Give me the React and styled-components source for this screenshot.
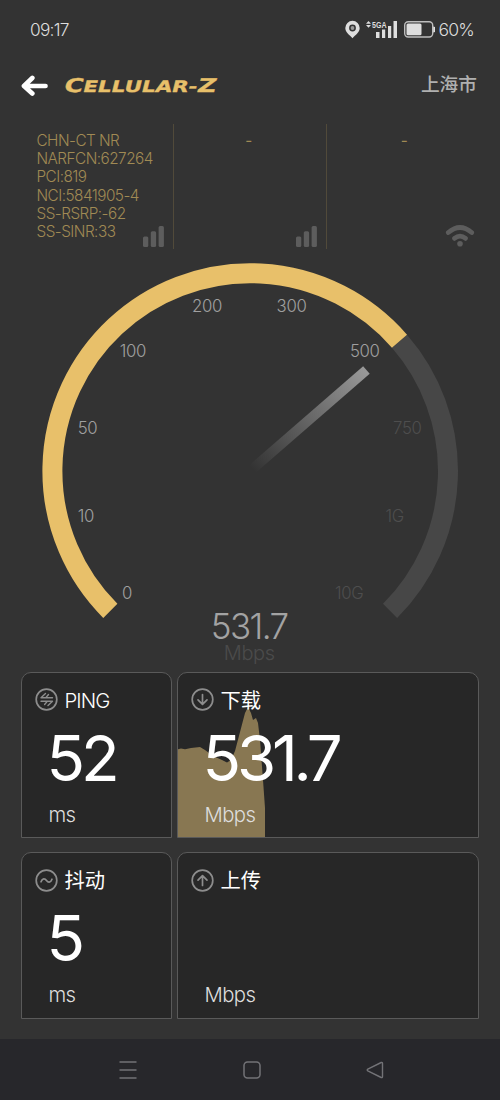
import React from 'react';
import styled, { createGlobalStyle } from 'styled-components';

const colors = {
  background: '#333333',
  card: '#272727',
  cardBorder: '#5a5a5a',
  gold: '#e8c06a',
  goldDim: '#a08a54',
  goldFill: '#887752',
  track: '#474747',
  icon: '#5d5d5d',
};

const fontStack = "Inter, 'Noto Sans CJK SC', sans-serif";

const GlobalStyle = createGlobalStyle`
  body {
    margin: 0;
    background: ${colors.background};
  }

  * {
    box-sizing: border-box;
  }

  svg {
    display: block;
  }
`;

const Screen = styled.div`
  width: 500px;
  height: 1100px;
  display: flex;
  flex-direction: column;
  overflow: hidden;
  background: ${colors.background};
  font-family: ${fontStack};
  font-weight: 300;
`;

const StatusBar = styled.div`
  height: 58px;
  padding: 0 26px 0 30px;
  display: flex;
  align-items: center;
  justify-content: space-between;
  color: #dedede;
`;

const Clock = styled.span`
  font-size: 17.3px;
  letter-spacing: -0.75px;
`;

const StatusIcons = styled.div`
  display: flex;
  align-items: center;
  gap: 6px;
`;

const Battery = styled.div`
  display: flex;
  align-items: center;
  gap: 3px;
  margin-left: 1px;
`;

const Percent = styled.span`
  font-size: 17.6px;
  letter-spacing: -0.8px;
`;

const Header = styled.header`
  height: 54px;
  padding: 0 23px 0 21px;
  display: flex;
  align-items: center;
  gap: 14px;
`;

const City = styled.span`
  margin: -5px 0 0 auto;
  font-family: 'Noto Sans CJK SC', sans-serif;
  font-size: 18.7px;
  font-weight: 500;
  color: #b0b0b0;
`;

const NetworkRow = styled.div`
  display: grid;
  grid-template-columns: 154px 153px 1fr;
  height: 125px;
  margin: 12px 20px 0;
`;

const NetworkCell = styled.div`
  display: flex;
  flex-direction: column;
  justify-content: space-between;
  padding: 8px ${({ last }) => (last ? '5px' : '9px')} 2px 0;
  border-right: ${({ last }) => (last ? 'none' : '1px solid #514a3a')};
  color: ${colors.goldDim};
  font-size: 15.3px;
  line-height: 18.2px;
  letter-spacing: -0.52px;

  > svg {
    align-self: flex-end;
  }
`;

const NetworkLines = styled.div`
  height: 92px;
  padding-left: 16.5px;
  white-space: nowrap;
`;

const Dash = styled.div`
  padding-left: 6px;
  font-weight: 400;
  text-align: center;
`;

const GaugeArea = styled.div`
  height: 422.5px;
`;

const Cards = styled.div`
  display: grid;
  grid-template-columns: 151px 302px;
  grid-template-rows: 166.5px 166.5px;
  gap: 14px 5px;
  padding-left: 21px;
`;

const Card = styled.section`
  position: relative;
  overflow: hidden;
  padding: 15px 0 0 12.5px;
  background: ${colors.card};
  border: 1px solid ${colors.cardBorder};
  border-radius: 10px 10px 0 0;
`;

const CardHeader = styled.div`
  position: relative;
  display: flex;
  align-items: center;
  height: 24px;
  gap: 7px;
  color: #8d8d8d;
`;

const CardTitle = styled.span`
  padding-top: 2px;
  color: #ffffff;
  font-size: 20.3px;
  letter-spacing: ${({ latin }) => (latin ? '-0.9px' : '0')};
  font-weight: ${({ latin }) => (latin ? 300 : 400)};
  line-height: 24px;
`;

const Value = styled.div`
  position: relative;
  height: 94px;
  padding-left: 12px;
  color: #ffffff;
  font-size: 63.5px;
  font-weight: 400;
  line-height: 92px;
  letter-spacing: -4.2px;
`;

const Unit = styled.div`
  position: relative;
  padding-left: 14px;
  color: #dddddd;
  font-size: 20.3px;
  line-height: 17px;
  letter-spacing: -0.6px;
`;

const ChartLayer = styled.svg`
  position: absolute;
  left: -1px;
  bottom: -1px;
`;

const NavBar = styled.nav`
  height: 61px;
  margin-top: auto;
  padding: 0 116px 0 119px;
  display: flex;
  align-items: center;
  justify-content: space-between;
  background: #27272b;
`;

const PinIcon = () => (
  <svg width="15" height="19" viewBox="0 0 15 19">
    <path
      fill="#dedede"
      fillRule="evenodd"
      d="M7.500 0.800a7.200 7.200 0 0 1 7.200 7.200c0 4.300-4.200 7-7.200 10.200c-3-3.200-7.200-5.900-7.200-10.200a7.200 7.200 0 0 1 7.200-7.200zM7.500 4.600a3.400 3.400 0 1 0 0 6.800a3.400 3.400 0 0 0 0-6.800z"
    />
    <circle cx="7.500" cy="8" r="1.900" fill="#9a9a9a" />
  </svg>
);

const CellIcon = () => (
  <svg width="31" height="19" viewBox="0 0 31 19" fill="#dedede">
    <path d="M0 3.800L2.500 1L5 3.800zM0 5H5L2.500 7.800z" />
    <text
      x="6"
      y="8"
      fontFamily="'Liberation Sans', sans-serif"
      fontSize="9.500"
      fontWeight="700"
      textLength="14.500"
      lengthAdjust="spacingAndGlyphs"
    >
      5GA
    </text>
    <rect x="10" y="12" width="3.500" height="6" />
    <rect x="16" y="9.500" width="3.200" height="8.500" />
    <rect x="22" y="6" width="3.200" height="12" />
    <rect x="27.500" y="1" width="3.500" height="17" />
  </svg>
);

const BatteryIcon = () => (
  <svg width="31" height="17" viewBox="0 0 31 17">
    <rect
      x="0.700"
      y="0.700"
      width="28"
      height="15.300"
      rx="3.500"
      fill="none"
      stroke="#bdbdbd"
      strokeWidth="1.400"
    />
    <rect x="2.500" y="2.500" width="15" height="11.700" rx="1.500" fill="#dedede" />
    <path d="M29.200 5.500a2.800 2.800 0 0 1 0 6z" fill="#dedede" />
  </svg>
);

const BackArrow = () => (
  <svg width="28" height="22" viewBox="0 0 28 22">
    <path
      d="M11.300 4L3 12L11.300 19.500M3.500 12H24.500"
      fill="none"
      stroke="#ffffff"
      strokeWidth="4.700"
      strokeLinecap="round"
      strokeLinejoin="round"
    />
  </svg>
);

const Logo = () => (
  <svg width="160" height="26" viewBox="0 0 160 26">
    <text
      x="5"
      y="20"
      transform="skewX(-14)"
      fill={colors.gold}
      stroke={colors.gold}
      strokeWidth="0.300"
      fontFamily="'DejaVu Sans', sans-serif"
      fontWeight="700"
      fontSize="15.800"
      textLength="152"
      lengthAdjust="spacingAndGlyphs"
    >
      <tspan fontSize="19">C</tspan>ELLULAR-<tspan fontSize="19">Z</tspan>
    </text>
  </svg>
);

const SignalIcon = () => (
  <svg width="21" height="21" viewBox="0 0 21 21" fill={colors.icon}>
    <rect x="0" y="10.500" width="5.300" height="10.500" rx="1.500" />
    <rect x="7.800" y="5.300" width="5.300" height="15.700" rx="1.500" />
    <rect x="15.600" y="0" width="5.300" height="21" rx="1.500" />
  </svg>
);

const WifiIcon = () => (
  <svg width="30" height="22" viewBox="0 0 30 22">
    <g fill="none" stroke={colors.icon} strokeWidth="4.700" strokeLinecap="round">
      <path d="M3.300 7.600Q15 -2.600 26.700 7.600" />
      <path d="M9.400 13.400Q15 9 20.600 13.400" />
    </g>
    <circle cx="15" cy="18.700" r="2.800" fill={colors.icon} />
  </svg>
);

const badgePaths = {
  ping: 'M10.500 5.500L6 9.700H17.500M6 13.300H17.500L13 17.500M10.800 9.600L13.500 6.500M12.300 13.400L9.600 16.500',
  down: 'M11.500 6.500V16M7 11.800L11.500 16.300L16 11.800',
  up: 'M11.500 16.500V7M7 11.200L11.500 6.700L16 11.200',
  jitter: 'M6 12.800C7.500 8.800 10 9.300 11.500 11.500S15.500 14.200 17 10.200',
};

const Badge = ({ kind }) => (
  <svg width="23" height="23" viewBox="0 0 23 23" fill="none" stroke="currentColor">
    <circle cx="11.500" cy="11.500" r="10.300" strokeWidth="1.700" />
    <path
      d={badgePaths[kind]}
      strokeWidth={kind === 'ping' ? 1.4 : 1.7}
      strokeLinecap="round"
      strokeLinejoin="round"
    />
  </svg>
);

const ticks = [
  { label: '0', x: 127, y: 593 },
  { label: '10', x: 86, y: 516 },
  { label: '50', x: 87.5, y: 427.5 },
  { label: '100', x: 133, y: 350.5 },
  { label: '200', x: 207, y: 306 },
  { label: '300', x: 291.5, y: 306 },
  { label: '500', x: 364.7, y: 350.5 },
  { label: '750', x: 407.3, y: 427.5, dim: true },
  { label: '1G', x: 394.6, y: 516, dim: true },
  { label: '10G', x: 349.3, y: 593, dim: true },
];

const center = { x: 250.2, y: 471 };

const pointAt = (degrees, radius) => {
  const angle = (degrees * Math.PI) / 180;
  return [
    center.x + radius * Math.cos(angle),
    center.y + radius * Math.sin(angle),
  ].join(' ');
};

const arc = (from, to, radius) =>
  `M${pointAt(from, radius)}A${radius} ${radius} 0 ${
    to - from > 180 ? 1 : 0
  } 1 ${pointAt(to, radius)}`;

const Gauge = () => (
  <svg width="500" height="422" viewBox="0 249 500 422" fontFamily={fontStack}>
    <defs>
      <linearGradient
        id="needle"
        gradientUnits="userSpaceOnUse"
        x1="3"
        y1="0"
        x2="154"
        y2="0"
      >
        <stop offset="0" stopColor="#999999" stopOpacity="0" />
        <stop offset="1" stopColor="#999999" />
      </linearGradient>
    </defs>
    <path d={arc(-41, 45, 197.8)} fill="none" stroke={colors.track} strokeWidth="20" />
    <path d={arc(135, 319, 197.8)} fill="none" stroke={colors.gold} strokeWidth="20" />
    <rect
      x="0"
      y="-5"
      width="154"
      height="10"
      fill="url(#needle)"
      transform={`translate(${center.x} ${center.y}) rotate(-41)`}
    />
    <g fontSize="16.800" letterSpacing="-0.350" textAnchor="middle">
      {ticks.map(({ label, x, y, dim }) => (
        <text key={label} x={x} y={y + 6} fill={dim ? '#4e4e4e' : '#a0a0a0'}>
          {label}
        </text>
      ))}
    </g>
    <text
      x="249.200"
      y="638.500"
      fontSize="35"
      letterSpacing="-1.600"
      textAnchor="middle"
      fill="#a3a3a3"
    >
      531.7
    </text>
    <text
      x="249.200"
      y="659.500"
      fontSize="20"
      letterSpacing="-0.400"
      textAnchor="middle"
      fill="#4b4b4b"
    >
      Mbps
    </text>
  </svg>
);

const SpeedChart = () => (
  <ChartLayer width="88" height="134" viewBox="0 0 88 134">
    <path
      fill={colors.goldFill}
      d="M0 134V45.500L4 44.500L8 45.200L14 44L23 43L28 46L36 52L45 56L50 58.500L54 56L58 47L68 9L71 3L74 9L76 16L79 14L81 19L83 36L86 76L88 104V134z"
    />
  </ChartLayer>
);

const NetworkInfo = ({ lines }) => (
  <NetworkLines>
    {lines.map(line => (
      <div key={line}>{line}</div>
    ))}
  </NetworkLines>
);

const Metric = ({ kind, title, latin, value, unit, children }) => (
  <Card>
    {children}
    <CardHeader>
      <Badge kind={kind} />
      <CardTitle latin={latin ? 1 : undefined}>{title}</CardTitle>
    </CardHeader>
    <Value>{value}</Value>
    <Unit>{unit}</Unit>
  </Card>
);

const App = () => (
  <Screen>
    <GlobalStyle />
    <StatusBar>
      <Clock>09:17</Clock>
      <StatusIcons>
        <PinIcon />
        <CellIcon />
        <Battery>
          <BatteryIcon />
          <Percent>60%</Percent>
        </Battery>
      </StatusIcons>
    </StatusBar>
    <Header>
      <BackArrow />
      <Logo />
      <City>上海市</City>
    </Header>
    <NetworkRow>
      <NetworkCell>
        <NetworkInfo
          lines={[
            'CHN-CT NR',
            'NARFCN:627264',
            'PCI:819',
            'NCI:5841905-4',
            'SS-RSRP:-62',
            'SS-SINR:33',
          ]}
        />
        <SignalIcon />
      </NetworkCell>
      <NetworkCell>
        <Dash>-</Dash>
        <SignalIcon />
      </NetworkCell>
      <NetworkCell last={1}>
        <Dash>-</Dash>
        <WifiIcon />
      </NetworkCell>
    </NetworkRow>
    <GaugeArea>
      <Gauge />
    </GaugeArea>
    <Cards>
      <Metric kind="ping" title="PING" latin value="52" unit="ms" />
      <Metric kind="down" title="下载" value="531.7" unit="Mbps">
        <SpeedChart />
      </Metric>
      <Metric kind="jitter" title="抖动" value="5" unit="ms" />
      <Metric kind="up" title="上传" value="" unit="Mbps" />
    </Cards>
    <NavBar>
      <svg width="18" height="18" viewBox="0 0 18 18" stroke="#737377" strokeWidth="1.500">
        <path d="M0.500 1H17.500M0.500 9H17.500M0.500 17H17.500" />
      </svg>
      <svg width="18" height="18" viewBox="0 0 18 18" fill="none" stroke="#737377" strokeWidth="1.500">
        <rect x="1" y="1" width="16" height="16" rx="3.500" />
      </svg>
      <svg
        width="18"
        height="18"
        viewBox="0 0 18 18"
        fill="none"
        stroke="#737377"
        strokeWidth="1.400"
        strokeLinejoin="round"
      >
        <path d="M15.200 1.500Q16.500 1 16.500 2.500V15.500Q16.500 17 15.200 16.500L1.800 9.800Q0.600 9 1.800 8.200z" />
      </svg>
    </NavBar>
  </Screen>
);

export default App;
